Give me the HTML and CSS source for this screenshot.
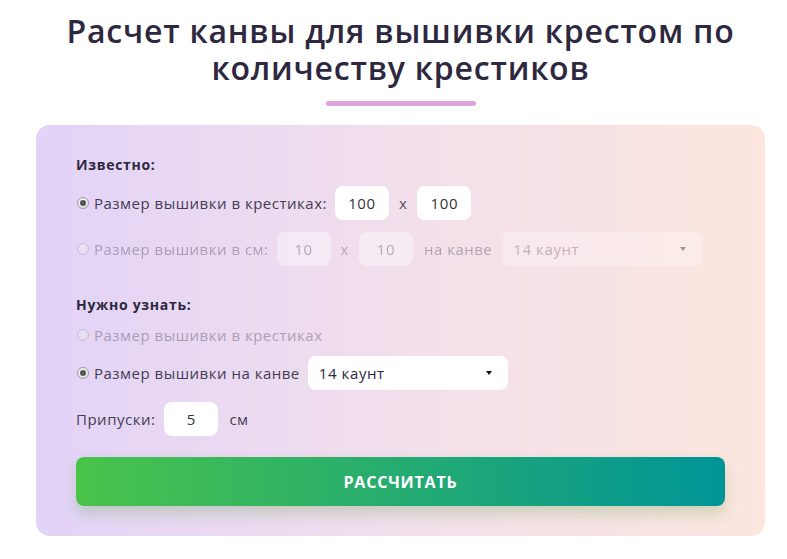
FILE: index.html
```html
<!DOCTYPE html>
<html lang="ru">
<head>
  <meta charset="UTF-8" />
  <title>Расчет канвы для вышивки крестом</title>
  <link rel="stylesheet" href="styles.css">
</head>
<body>

  <div class="page">
    <h1>Расчет канвы для вышивки крестом по количеству крестиков</h1>
    <div class="underline"></div>

    <div class="calc">
      <div class="caption">Известно:</div>

      <div class="row">
        <label class="radio"><input type="radio" name="known" checked> Размер вышивки в крестиках:</label>
        <input class="num" type="text" value="100">
        <span class="sep">x</span>
        <input class="num" type="text" value="100">
      </div>

      <div class="row off">
        <label class="radio"><input type="radio" name="known"> Размер вышивки в см:</label>
        <input class="num" type="text" value="10" disabled>
        <span class="sep">x</span>
        <input class="num" type="text" value="10" disabled>
        <span class="word">на канве</span>
        <div class="select">
          <select disabled><option>14 каунт</option></select>
        </div>
      </div>

      <div class="caption second">Нужно узнать:</div>

      <div class="row small off">
        <label class="radio"><input type="radio" name="need"> Размер вышивки в крестиках</label>
      </div>

      <div class="row">
        <label class="radio"><input type="radio" name="need" checked> Размер вышивки на канве</label>
        <div class="select">
          <select><option>14 каунт</option><option>16 каунт</option><option>18 каунт</option></select>
        </div>
      </div>

      <div class="row">
        <span class="word first">Припуски:</span>
        <input class="num" type="text" value="5">
        <span class="word">см</span>
      </div>

      <button class="calc-btn" type="button">РАССЧИТАТЬ</button>
    </div>
  </div>

</body>
</html>
```

FILE: styles.css
```css
body {
  margin: 0;
  background: #fff;
  font-family: "Open Sans", "DejaVu Sans", sans-serif;
  color: #433d52;
}
.page {
  width: 729px;
  margin: 0 0 0 36px;
}
h1 {
  margin: 12px 0 0;
  font-size: 32px;
  line-height: 37px;
  font-weight: 600;
  letter-spacing: 0.8px;
  text-align: center;
  color: #2d2840;
  padding: 0 10px;
}
.underline {
  width: 150px;
  height: 5px;
  border-radius: 3px;
  background: #dda4de;
  margin: 15px auto 19px;
}
.calc {
  background: linear-gradient(to right, #e2d3f8, #f3e0ea 55%, #fce6de);
  border-radius: 14px;
  padding: 30px 40px 30px;
}
.caption {
  font-size: 14px;
  font-weight: 700;
  line-height: 20px;
  letter-spacing: 0.7px;
  color: #2d2840;
  margin-bottom: 11px;
}
.caption.second {
  margin-top: 29px;
  margin-bottom: 10px;
}
.row {
  display: flex;
  align-items: center;
  height: 34px;
  margin-bottom: 12px;
  font-size: 15px;
  letter-spacing: 0.5px;
}
.row.small {
  height: 20px;
  margin-bottom: 11px;
}
.row.off {
  opacity: 0.38;
}
.radio {
  display: flex;
  align-items: center;
  margin-right: 8px;
}
.radio input {
  appearance: none;
  width: 12px;
  height: 12px;
  margin: 0 5px 0 1px;
  border-radius: 50%;
  border: 1px solid #9a9a9a;
  background: radial-gradient(circle at 50% 35%, #fff, #d8d8d8);
  position: relative;
}
.radio input:checked::after {
  content: "";
  position: absolute;
  left: 2px;
  top: 2px;
  width: 6px;
  height: 6px;
  border-radius: 50%;
  background: #555;
}
.num {
  width: 54px;
  height: 34px;
  box-sizing: border-box;
  border: none;
  border-radius: 8px;
  background: #fff;
  text-align: center;
  font-family: inherit;
  font-size: 15px;
  letter-spacing: 0.6px;
  color: #333;
  outline: none;
}
.num:disabled {
  background: #fff;
  color: #555;
}
.sep {
  margin: 0 10px;
  color: #555;
}
.word {
  margin: 0 10px 0 11px;
}
.word.first {
  margin: 0 9px 0 0;
}
.select {
  position: relative;
  width: 200px;
  height: 34px;
}
.select select {
  appearance: none;
  width: 100%;
  height: 100%;
  border: none;
  border-radius: 8px;
  background: #fff;
  padding: 0 11px;
  font-family: inherit;
  font-size: 15px;
  letter-spacing: 0.6px;
  color: #2d2840;
  outline: none;
}
.select::after {
  content: "";
  position: absolute;
  right: 16px;
  top: 15px;
  border-left: 3.5px solid transparent;
  border-right: 3.5px solid transparent;
  border-top: 4px solid #111;
  pointer-events: none;
}
.calc-btn {
  display: block;
  width: 100%;
  height: 49px;
  margin-top: 21px;
  border: none;
  border-radius: 8px;
  background: linear-gradient(to right, #4ac34a, #009497);
  box-shadow: 0 8px 14px rgba(110, 170, 90, 0.3);
  color: #fff;
  font-family: inherit;
  font-size: 16px;
  font-weight: 700;
  letter-spacing: 0.8px;
  cursor: pointer;
}
```
